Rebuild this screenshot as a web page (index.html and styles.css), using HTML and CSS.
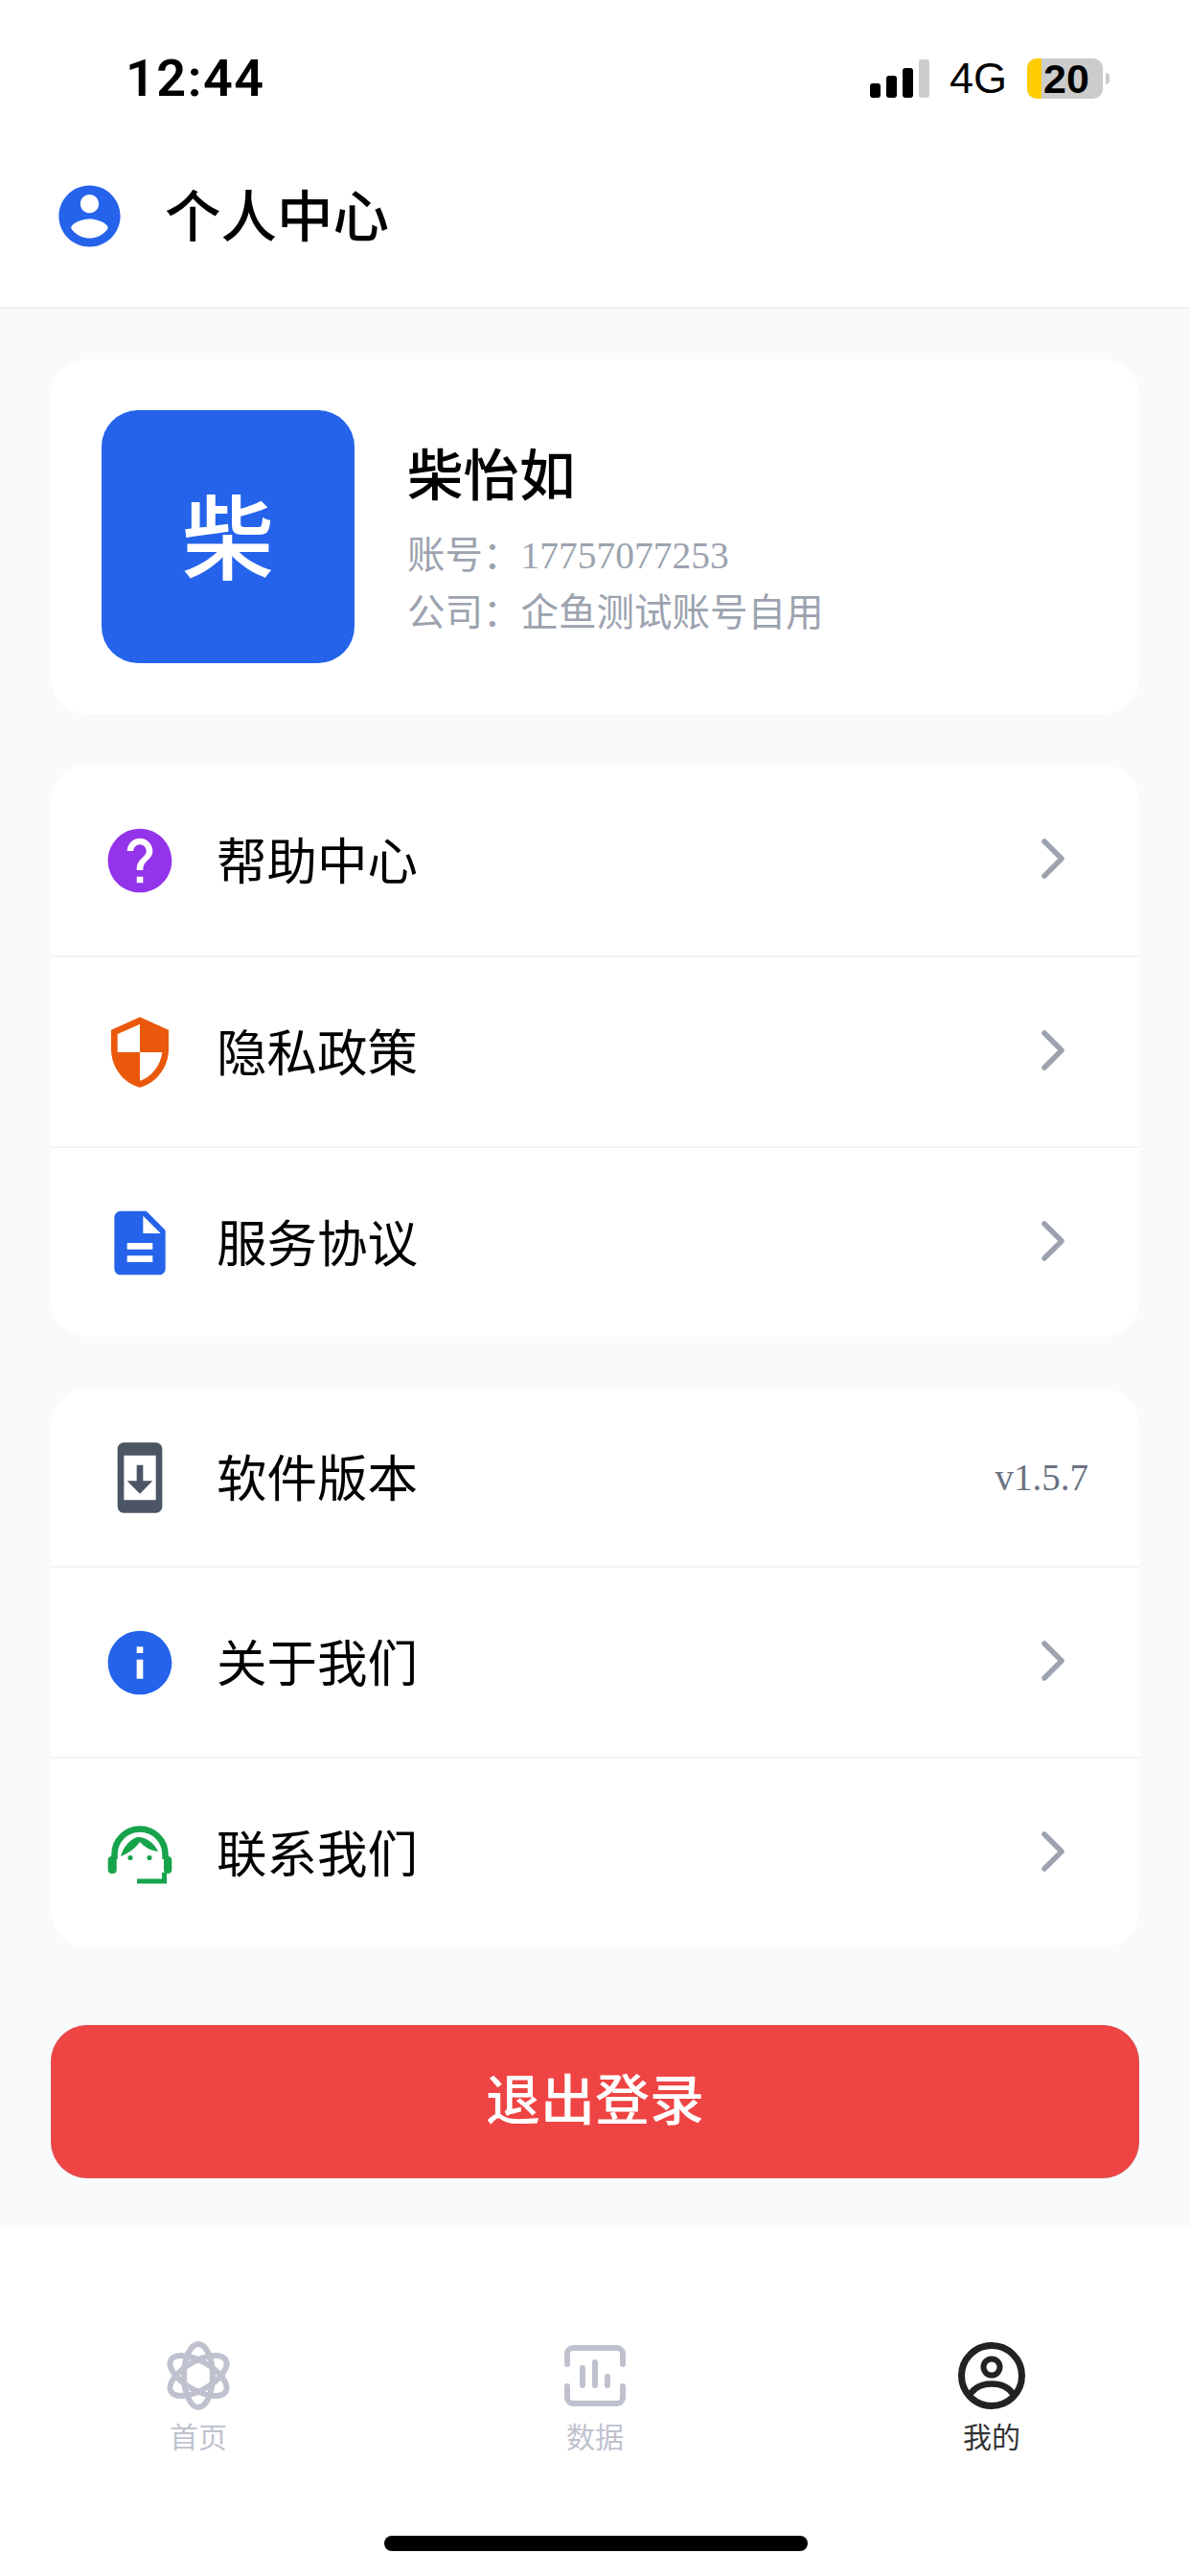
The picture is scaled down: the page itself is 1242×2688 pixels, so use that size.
FILE: index.html
```html
<!DOCTYPE html>
<html lang="zh">
<head>
<meta charset="utf-8">
<title>个人中心</title>
<link rel="stylesheet" href="styles.css">
</head>
<body>
<div class="app">
  <header class="top">
    <div class="status">
      <span class="time">12:44</span>
      <div class="status-right">
        <div class="signal"><i class="b1"></i><i class="b2"></i><i class="b3"></i><i class="b4"></i></div>
        <span class="net">4G</span>
        <div class="battery"><div class="batt-body"><span class="batt-fill"></span><span class="batt-num">20</span></div><span class="batt-nub"></span></div>
      </div>
    </div>
    <div class="nav">
      <svg class="nav-icon" viewBox="0 0 24 24"><path fill="#2563eb" d="M12 2C6.48 2 2 6.48 2 12s4.48 10 10 10 10-4.48 10-10S17.52 2 12 2zm0 3c1.66 0 3 1.34 3 3s-1.34 3-3 3-3-1.34-3-3 1.34-3 3-3zm0 14.2c-2.5 0-4.71-1.28-6-3.22.03-1.99 4-3.08 6-3.08 1.99 0 5.97 1.09 6 3.08-1.29 1.94-3.5 3.22-6 3.22z"/></svg>
      <h1 class="title">个人中心</h1>
    </div>
  </header>

  <main class="main">
    <section class="card profile">
      <div class="avatar">柴</div>
      <div class="info">
        <div class="name">柴怡如</div>
        <div class="meta">账号：17757077253</div>
        <div class="meta">公司：企鱼测试账号自用</div>
      </div>
    </section>

    <section class="card">
      <div class="row">
        <svg class="row-icon" viewBox="0 0 24 24"><path fill="#9333ea" d="M12 2C6.48 2 2 6.48 2 12s4.48 10 10 10 10-4.48 10-10S17.52 2 12 2zm1 17h-2v-2h2v2zm2.07-7.75l-.9.92C13.45 12.9 13 13.5 13 15h-2v-.5c0-1.1.45-2.1 1.17-2.83l1.24-1.26c.37-.36.59-.86.59-1.41 0-1.1-.9-2-2-2s-2 .9-2 2H8c0-2.21 1.79-4 4-4s4 1.79 4 4c0 .88-.36 1.68-.93 2.25z"/></svg>
        <span class="label">帮助中心</span>
        <svg class="chev" viewBox="0 0 60 60"><path d="M14 10l18 18-18 18"/></svg>
      </div>
      <div class="row">
        <svg class="row-icon" viewBox="0 0 24 24"><path fill="#ea580c" d="M12 1L3 5v6c0 5.55 3.84 10.74 9 12 5.16-1.26 9-6.45 9-12V5l-9-4zm0 10.99h7c-.53 4.12-3.28 7.79-7 8.94V12H5V6.3l7-3.11v8.8z"/></svg>
        <span class="label">隐私政策</span>
        <svg class="chev" viewBox="0 0 60 60"><path d="M14 10l18 18-18 18"/></svg>
      </div>
      <div class="row">
        <svg class="row-icon" viewBox="0 0 24 24"><path fill="#2563eb" d="M14 2H6c-1.1 0-1.99.9-1.99 2L4 20c0 1.1.89 2 1.99 2H18c1.1 0 2-.9 2-2V8l-6-6zm2 16H8v-2h8v2zm0-4H8v-2h8v2zm-3-5V3.5L18.5 9H13z"/></svg>
        <span class="label">服务协议</span>
        <svg class="chev" viewBox="0 0 60 60"><path d="M14 10l18 18-18 18"/></svg>
      </div>
    </section>

    <section class="card">
      <div class="row row-short">
        <svg class="row-icon" viewBox="0 0 24 24"><path fill="#4b5563" d="M17 1.01L7 1c-1.1 0-2 .9-2 2v18c0 1.1.9 2 2 2h10c1.1 0 2-.9 2-2V3c0-1.1-.9-1.99-2-1.99zM17 19H7V5h10v14zm-1-6h-3V8h-2v5H8l4 4 4-4z"/></svg>
        <span class="label">软件版本</span>
        <span class="version">v1.5.7</span>
      </div>
      <div class="row">
        <svg class="row-icon" viewBox="0 0 24 24"><path fill="#2563eb" d="M12 2C6.48 2 2 6.48 2 12s4.48 10 10 10 10-4.48 10-10S17.52 2 12 2zm1 15h-2v-6h2v6zm0-8h-2V7h2v2z"/></svg>
        <span class="label">关于我们</span>
        <svg class="chev" viewBox="0 0 60 60"><path d="M14 10l18 18-18 18"/></svg>
      </div>
      <div class="row">
        <svg class="row-icon" viewBox="0 0 80 80">
          <path d="M13.5 46V41a26.5 26.5 0 0 1 53 0v5" fill="none" stroke="#16a34a" stroke-width="6.5"/>
          <rect x="6.7" y="43" width="9" height="18" rx="4" fill="#16a34a"/>
          <rect x="65" y="43" width="8.3" height="18" rx="4" fill="#16a34a"/>
          <path d="M37 69h28.5V60" fill="none" stroke="#16a34a" stroke-width="5"/>
          <path d="M20 43C23 33 29 26 37 23C44 22 55 28 59 38C51 37 44 33 40 28C36 34 28 40 20 43Z" fill="#16a34a"/>
          <circle cx="30" cy="44.5" r="2.6" fill="#16a34a"/>
          <circle cx="50" cy="44.5" r="2.6" fill="#16a34a"/>
        </svg>
        <span class="label">联系我们</span>
        <svg class="chev" viewBox="0 0 60 60"><path d="M14 10l18 18-18 18"/></svg>
      </div>
    </section>

    <button class="logout" type="button">退出登录</button>
  </main>

  <nav class="tabs">
    <div class="tab">
      <svg class="tab-icon" viewBox="0 0 80 80" fill="none" stroke="#bfc2ce" stroke-width="6">
        <ellipse cx="40" cy="40" rx="15" ry="33"/>
        <ellipse cx="40" cy="40" rx="15" ry="33" transform="rotate(60 40 40)"/>
        <ellipse cx="40" cy="40" rx="15" ry="33" transform="rotate(-60 40 40)"/>
      </svg>
      <span class="tab-label">首页</span>
    </div>
    <div class="tab">
      <svg class="tab-icon" viewBox="0 0 80 80" fill="none" stroke="#bfc2ce" stroke-width="6" stroke-linecap="round">
        <path d="M11 28V17a6 6 0 0 1 6-6H63a6 6 0 0 1 6 6V28"/>
        <path d="M11 51V63a6 6 0 0 0 6 6H63a6 6 0 0 0 6-6V51"/>
        <path d="M27 32V50M40 26V50M53 41V50"/>
      </svg>
      <span class="tab-label">数据</span>
    </div>
    <div class="tab tab-active">
      <svg class="tab-icon" viewBox="0 0 80 80" fill="none" stroke="#222" stroke-width="7">
        <circle cx="40" cy="40" r="31.5"/>
        <circle cx="40" cy="31" r="8.5" stroke-width="6"/>
        <path d="M17 60C22 52 30 48.5 40 48.5S58 52 63 60" stroke-width="6.5"/>
      </svg>
      <span class="tab-label">我的</span>
    </div>
    <span class="home-bar"></span>
  </nav>
</div>
</body>
</html>
```

FILE: styles.css
```css
* { box-sizing: border-box; }
html, body { margin: 0; padding: 0; }
body {
  width: 1242px;
  height: 2688px;
  background: #fff;
  font-family: "Liberation Serif", "Noto Sans CJK SC", serif;
  color: #000;
}
.app { display: flex; flex-direction: column; height: 2688px; }

.top { height: 322px; background: #fff; border-bottom: 2px solid #f1f2f5; flex: none; }
.status {
  height: 128px;
  display: flex;
  justify-content: space-between;
  align-items: center;
  padding: 36px 84px 0 131px;
}
.time { font-family: Roboto, sans-serif; font-weight: 600; font-size: 54px; line-height: 64px; letter-spacing: 1.5px; }
.status-right { display: flex; align-items: center; gap: 21px; }
.signal { display: flex; align-items: flex-end; gap: 6px; height: 40px; }
.signal i { display: block; width: 11px; background: #000; border-radius: 3px; }
.signal .b1 { height: 15px; }
.signal .b2 { height: 23px; }
.signal .b3 { height: 31px; }
.signal .b4 { height: 40px; background: #cdcdcd; }
.net { font-family: "Liberation Sans", sans-serif; font-size: 45px; line-height: 48px; }
.battery { display: flex; align-items: center; gap: 3px; }
.batt-body {
  position: relative;
  width: 79px;
  height: 42px;
  background: #cbcbcb;
  border-radius: 10px;
  display: flex;
  align-items: center;
  justify-content: center;
}
.batt-fill { position: absolute; left: 0; top: 0; bottom: 0; width: 15px; background: #ffcc00; border-radius: 10px 0 0 10px; }
.batt-num { position: relative; font-family: "Liberation Sans", sans-serif; font-weight: 700; font-size: 43px; line-height: 42px; margin-left: 3px; }
.batt-nub { width: 4px; height: 12px; background: #cbcbcb; border-radius: 0 6px 6px 0; }

.nav { height: 192px; display: flex; align-items: center; padding: 2px 0 0 55px; gap: 40px; }
.nav-icon { width: 77px; height: 77px; flex: none; }
.title { margin: 0; padding-top: 5px; font-size: 58.5px; font-weight: 500; line-height: 80px; }

.main {
  flex: none;
  height: 2003px;
  background: #f9fafb;
  padding: 53px 53px 0;
  display: flex;
  flex-direction: column;
}
.card { background: #fff; border-radius: 38px; margin-bottom: 54px; flex: none; }
.profile { display: flex; align-items: center; padding: 53px; gap: 55px; height: 370px; margin-bottom: 53px; }
.avatar {
  width: 264px;
  height: 264px;
  border-radius: 38px;
  background: #2563eb;
  color: #fff;
  font-size: 96px;
  font-weight: 500;
  display: flex;
  align-items: center;
  justify-content: center;
  padding-bottom: 10px;
  flex: none;
}
.info { display: flex; flex-direction: column; padding-top: 11px; }
.name { font-size: 58.5px; font-weight: 500; line-height: 72px; margin-bottom: 16px; }
.meta { font-size: 39.5px; color: #9ca3af; line-height: 60px; }

.row {
  display: flex;
  align-items: center;
  height: 199px;
  padding: 0 53px;
  border-top: 2px solid #f3f4f6;
}
.row:first-child { border-top: 0; }
.row-short { height: 185px; }
.row-icon { width: 80px; height: 80px; flex: none; }
.label { font-size: 52.5px; margin-left: 40px; flex: 1; line-height: 72px; padding-top: 4px; }
.chev { width: 60px; height: 60px; flex: none; fill: none; stroke: #9ca3af; stroke-width: 5.5; stroke-linecap: round; stroke-linejoin: round; }
.version { font-size: 39px; color: #6b7280; margin-right: 0; }

.logout {
  margin-top: 27px;
  height: 160px;
  border: 1px solid #d95053;
  border-radius: 38px;
  background: #ef4444;
  color: #fff;
  font-family: "Liberation Serif", "Noto Sans CJK SC", serif;
  font-size: 57px;
  font-weight: 500;
  padding: 0 0 12px;
  flex: none;
}

.tabs { position: relative; flex: 1; display: grid; grid-template-columns: repeat(3, 1fr); align-content: start; padding-top: 114px; background: #fff; }
.tab { display: flex; flex-direction: column; align-items: center; }
.tab-icon { width: 80px; height: 80px; flex: none; }
.tab-label { font-size: 30px; line-height: 40px; margin-top: 5px; color: #bfc2ce; }
.tab-active .tab-label { color: #333; }
.home-bar { position: absolute; left: 401px; bottom: 26px; width: 442px; height: 16px; border-radius: 8px; background: #000; }
```
